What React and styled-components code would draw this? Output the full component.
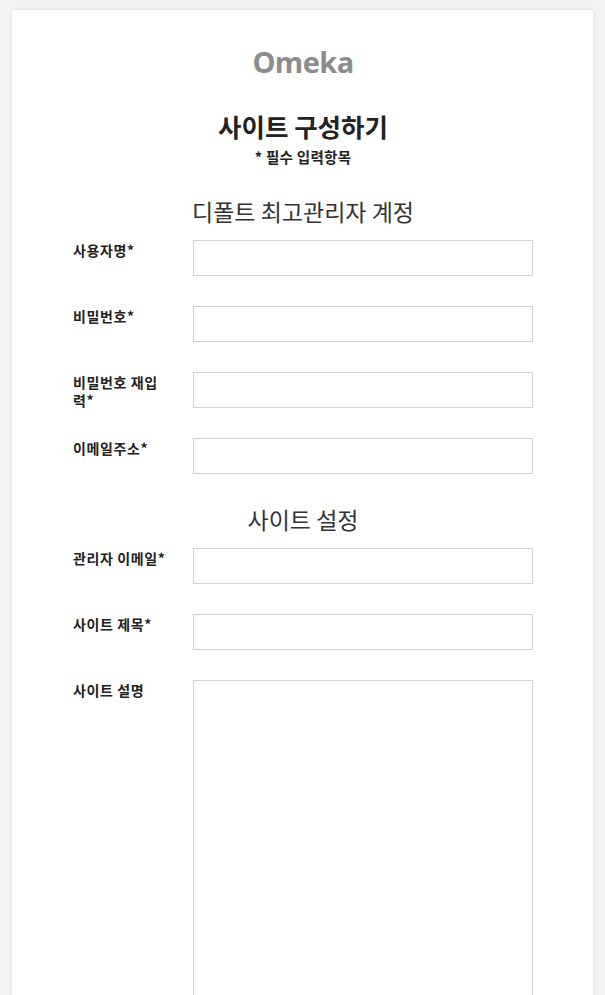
import React from "react";
import styled, { createGlobalStyle } from "styled-components";

const Global = createGlobalStyle`
  html, body { margin: 0; padding: 0; }
  body {
    background: #f3f3f3;
    font-family: "Open Sans", "Noto Sans CJK KR", sans-serif;
    color: #222;
  }
  * { box-sizing: border-box; }
`;

const Page = styled.div`
  padding: 10px 12px 0;
  height: 995px;
  overflow: hidden;
`;

const Card = styled.main`
  background: #fff;
  border-radius: 3px;
  box-shadow: 0 0 4px rgba(0, 0, 0, 0.08);
  padding: 32px 60px 40px 61px;
  min-height: 1100px;
`;

const Logo = styled.h1`
  margin: 0;
  text-align: center;
  font-family: "Open Sans", sans-serif;
  font-weight: 700;
  font-size: 29px;
  line-height: 40px;
  color: #8c8c8c;
  letter-spacing: -0.6px;
`;

const Title = styled.h2`
  margin: 28px 0 0;
  text-align: center;
  font-family: "Noto Sans CJK KR", sans-serif;
  font-weight: 700;
  font-size: 25.5px;
  line-height: 32px;
  color: #222;
`;

const Required = styled.p`
  margin: 5px 0 0;
  text-align: center;
  font-family: "Noto Sans CJK KR", sans-serif;
  font-weight: 700;
  font-size: 14.5px;
  line-height: 20px;
  letter-spacing: 0.3px;
  color: #222;
`;

const Fieldset = styled.fieldset`
  border: 0;
  margin: 29px 0 0;
  padding: 0;
  min-width: 0;
`;

const Legend = styled.legend`
  display: block;
  width: 100%;
  padding: 0;
  margin: 0 0 14px;
  text-align: center;
  font-family: "Noto Sans CJK KR", sans-serif;
  font-weight: 400;
  font-size: 23px;
  line-height: 30px;
  color: #333;
`;

const Rows = styled.div`
  display: flex;
  flex-direction: column;
  gap: 29px;
`;

const Row = styled.div`
  display: flex;
  align-items: flex-start;
  gap: 26px;
  min-height: 37px;
`;

const Label = styled.label`
  flex: 0 0 94px;
  padding-top: 1px;
  font-family: "Noto Sans CJK KR", sans-serif;
  font-weight: 700;
  font-size: 14px;
  line-height: 18px;
  letter-spacing: 0.6px;
  color: #222;
`;

const Input = styled.input`
  flex: 0 0 340px;
  height: 36px;
  border: 1px solid #d2d2d2;
  border-radius: 0;
  background: #fff;
  padding: 0 8px;
  font: inherit;
`;

const TextArea = styled.textarea`
  flex: 0 0 340px;
  height: 360px;
  border: 1px solid #d2d2d2;
  border-radius: 0;
  background: #fff;
  resize: none;
  font: inherit;
`;

const accountFields = [
  { id: "username", label: "사용자명*", type: "text" },
  { id: "password", label: "비밀번호*", type: "password" },
  { id: "password-confirm", label: "비밀번호 재입력*", type: "password" },
  { id: "email", label: "이메일주소*", type: "email" },
];

const siteFields = [
  { id: "admin-email", label: "관리자 이메일*", type: "email" },
  { id: "site-title", label: "사이트 제목*", type: "text" },
];

export default function App() {
  return (
    <>
      <Global />
      <Page>
        <Card>
          <Logo>Omeka</Logo>
          <Title>사이트 구성하기</Title>
          <Required>* 필수 입력항목</Required>
          <form>
            <Fieldset>
              <Legend>디폴트 최고관리자 계정</Legend>
              <Rows>
                {accountFields.map((f) => (
                  <Row key={f.id}>
                    <Label htmlFor={f.id}>{f.label}</Label>
                    <Input id={f.id} type={f.type} />
                  </Row>
                ))}
              </Rows>
            </Fieldset>
            <Fieldset>
              <Legend>사이트 설정</Legend>
              <Rows>
                {siteFields.map((f) => (
                  <Row key={f.id}>
                    <Label htmlFor={f.id}>{f.label}</Label>
                    <Input id={f.id} type={f.type} />
                  </Row>
                ))}
                <Row>
                  <Label htmlFor="site-desc">사이트 설명</Label>
                  <TextArea id="site-desc" />
                </Row>
              </Rows>
            </Fieldset>
          </form>
        </Card>
      </Page>
    </>
  );
}
